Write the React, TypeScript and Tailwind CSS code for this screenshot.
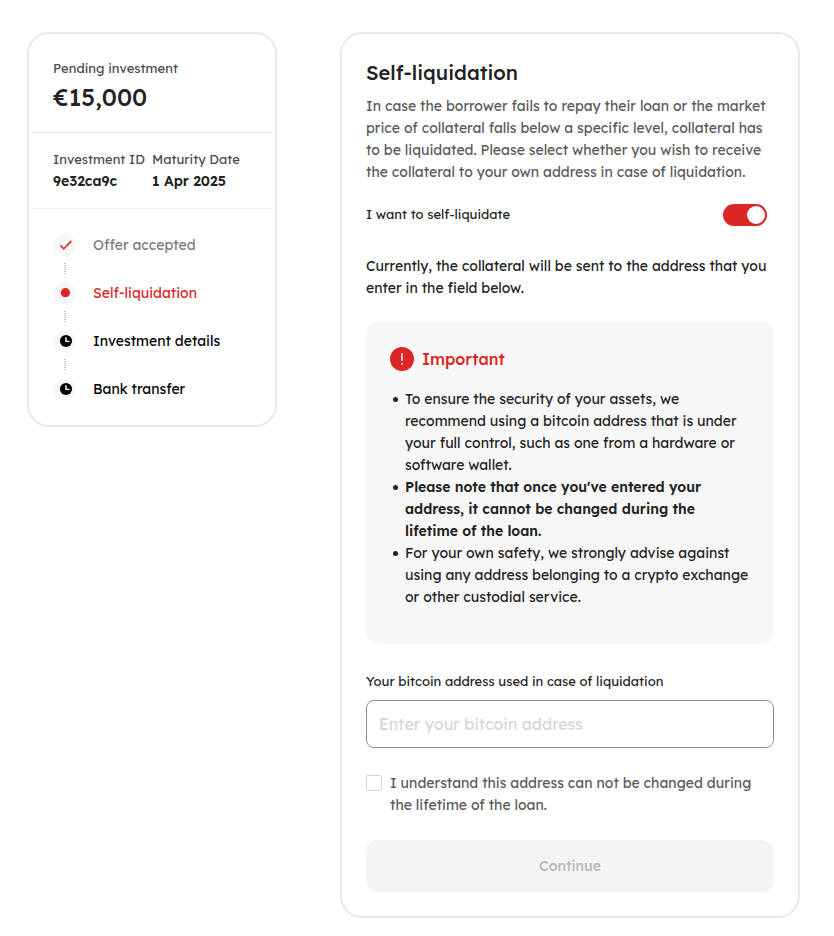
import React, { useState } from "react";

type StepState = "done" | "current" | "pending";

const steps: { label: string; state: StepState }[] = [
  { label: "Offer accepted", state: "done" },
  { label: "Self-liquidation", state: "current" },
  { label: "Investment details", state: "pending" },
  { label: "Bank transfer", state: "pending" },
];

const stepColors: Record<StepState, string> = {
  done: "text-[#7b7b7b]",
  current: "text-[#dc2626]",
  pending: "text-black",
};

const notes = [
  {
    text: "To ensure the security of your assets, we recommend using a bitcoin address that is under your full control, such as one from a hardware or software wallet.",
    strong: false,
  },
  {
    text: "Please note that once you've entered your address, it cannot be changed during the lifetime of the loan.",
    strong: true,
  },
  {
    text: "For your own safety, we strongly advise against using any address belonging to a crypto exchange or other custodial service.",
    strong: false,
  },
];

function StepIcon({ state }: { state: StepState }) {
  return (
    <svg viewBox="0 0 24 24" className="size-6 shrink-0" aria-hidden="true">
      <circle cx="12" cy="12" r="11" fill="#f7f7f7" />
      {state === "done" && (
        <path d="M7.4 12.4l3.4 3.4 7.6-7.8" fill="none" stroke="#e5383b" strokeWidth="1.8" />
      )}
      {state === "current" && <circle cx="12.4" cy="11.7" r="4.6" fill="#dc2626" />}
      {state === "pending" && (
        <>
          <circle cx="13" cy="12" r="6.1" fill="#000" />
          <path d="M13 8.2V12.4h3.6" fill="none" stroke="#fff" strokeWidth="1.4" />
        </>
      )}
    </svg>
  );
}

function Summary() {
  return (
    <aside className="w-[250px] shrink-0 rounded-[22px] border-2 border-slate-200 px-[3px]">
      <div className="border-b border-[#eeeff2] px-[21px] pt-6 pb-[18px]">
        <p className="mb-[2px] text-[13px] leading-5 text-[#4a4a4a]">Pending investment</p>
        <p className="text-2xl leading-[34px] font-medium">€15,000</p>
      </div>
      <dl className="flex gap-2 border-b border-[#eeeff2] px-[21px] pt-[15px] pb-4 whitespace-nowrap">
        <div className="w-[91px]">
          <dt className="text-[13px] leading-[22px] text-[#4a4a4a]">Investment ID</dt>
          <dd className="text-sm leading-[22px] font-semibold">9e32ca9c</dd>
        </div>
        <div>
          <dt className="text-[13px] leading-[22px] text-[#4a4a4a]">Maturity Date</dt>
          <dd className="text-sm leading-[22px] font-semibold">1 Apr 2025</dd>
        </div>
      </dl>
      <ol className="px-[21px] py-6 text-sm">
        {steps.map((step, i) => (
          <li key={step.label}>
            {i > 0 && (
              <div className="flex h-6 w-6 items-center justify-center">
                <svg viewBox="0 0 2 12" className="h-3 w-[2px]" aria-hidden="true">
                  <path d="M1 0V12" stroke="#c4c4c4" strokeWidth="2" strokeDasharray="1 1" />
                </svg>
              </div>
            )}
            <div className={`flex h-6 items-center gap-4 ${stepColors[step.state]}`}>
              <StepIcon state={step.state} />
              <span>{step.label}</span>
            </div>
          </li>
        ))}
      </ol>
    </aside>
  );
}

export default function App() {
  const [enabled, setEnabled] = useState(true);

  return (
    <main className="flex items-start gap-[63px] bg-white pt-8 pr-[34px] pb-[18px] pl-[27px] font-['Lexend','Inter',sans-serif] text-[#222]">
      <Summary />
      <form className="min-w-0 flex-1 rounded-[22px] border-2 border-slate-200 p-6 text-sm leading-[22px]">
        <h1 className="mb-[7px] text-xl leading-[30px] font-medium">Self-liquidation</h1>
        <p className="text-[#5a5a5a]">
          In case the borrower fails to repay their loan or the market price of collateral falls
          below a specific level, collateral has to be liquidated. Please select whether you wish to
          receive the collateral to your own address in case of liquidation.
        </p>

        <div className="mt-[21px] mr-[7px] flex items-start justify-between">
          <span id="liquidate" className="text-[13px] leading-5">I want to self-liquidate</span>
          <button
            type="button"
            role="switch"
            aria-checked={enabled}
            aria-labelledby="liquidate"
            onClick={() => setEnabled(!enabled)}
            className={`flex h-[22px] w-11 items-center rounded-full bg-[#dc2626] px-[2px] ${enabled ? "justify-end" : "justify-start"}`}
          >
            <span className="size-[18px] rounded-full bg-white" />
          </button>
        </div>

        <p className="mt-[29px]">
          Currently, the collateral will be sent to the address that you enter in the field below.
        </p>

        <section className="mt-[23px] rounded-xl bg-[#f7f7f7] px-6 pt-[25px] pb-9">
          <div className="flex items-center gap-2">
            <svg viewBox="0 0 24 24" className="size-6" aria-hidden="true">
              <circle cx="12" cy="12" r="12" fill="#dc2626" />
              <path d="M12 6.3v7.6M12 15.9v1.8" fill="none" stroke="#fff" strokeWidth="1.4" />
            </svg>
            <h2 className="text-base leading-6 font-medium text-[#dc2626]">Important</h2>
          </div>
          <ul className="mt-[17px] pl-[3px]">
            {notes.map((note) => (
              <li
                key={note.text}
                className={`flex gap-[7px] ${note.strong ? "font-semibold" : "font-normal"}`}
              >
                <span className="mt-[9px] size-[5px] shrink-0 rounded-full bg-[#222]" />
                <span>{note.text}</span>
              </li>
            ))}
          </ul>
        </section>

        <label htmlFor="address" className="mt-[27px] block text-[13px] leading-5">
          Your bitcoin address used in case of liquidation
        </label>
        <input
          id="address"
          type="text"
          placeholder="Enter your bitcoin address"
          className="mt-[9px] block h-12 w-full rounded-lg border border-[#8f8f8f] px-3 text-base placeholder:text-[#d6d6d6]"
        />

        <div className="mt-6 flex items-start gap-2 text-[#5a5a5a]">
          <input
            id="confirm"
            type="checkbox"
            className="mt-[3px] size-4 shrink-0 appearance-none rounded-[1px] border border-[#d4d4d4] bg-white checked:bg-[#dc2626]"
          />
          <label htmlFor="confirm">
            I understand this address can not be changed during the lifetime of the loan.
          </label>
        </div>

        <button
          type="submit"
          disabled
          className="mt-6 block h-[52px] w-full rounded-xl bg-[#f4f4f4] font-medium text-[#b9b9b9]"
        >
          Continue
        </button>
      </form>
    </main>
  );
}
